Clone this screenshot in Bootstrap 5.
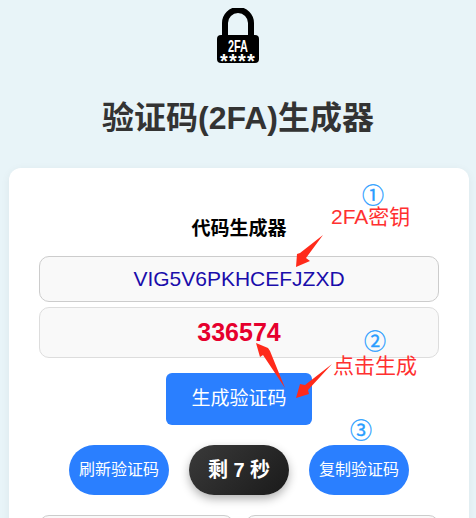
<!DOCTYPE html>
<html lang="en">

<head>
  <meta charset="UTF-8">
  <title>验证码(2FA)生成器</title>
  <link href="https://cdn.jsdelivr.net/npm/bootstrap@5.3.3/dist/css/bootstrap.min.css" rel="stylesheet">
  <style>
    body {
      background: #e8f4f8;
      font-family: "Liberation Sans", "Noto Sans CJK SC", sans-serif;
      color: #333;
      padding: 8px 7px 20px 7px;
    }

    .logo-box {
      height: 56px;
    }

    .logo-box svg {
      flex-shrink: 0;
    }

    .page-title {
      font-size: 32px;
      font-weight: 700;
      line-height: 37px;
      margin: 36px 0 31px;
      color: #333;
    }

    .main-box {
      position: relative;
      background: #fff;
      border-radius: 12px;
      padding: 49px 30px 30px;
      margin: 0 0 0 2px;
      box-shadow: 0 2px 10px rgba(0, 0, 0, .06);
    }

    .box-title {
      font-size: 19px;
      font-weight: 700;
      line-height: 24px;
      color: #000;
      margin-bottom: 15px;
    }

    .field {
      background: #f9f9f9;
      border: 1px solid #ccc;
      border-radius: 10px;
      text-align: center;
    }

    .secret-field {
      height: 46px;
      line-height: 44px;
      font-size: 21px;
      color: #1a0dab;
      margin-bottom: 5px;
    }

    .code-field {
      height: 51px;
      line-height: 49px;
      font-size: 25px;
      font-weight: 700;
      color: #e6002d;
      border-color: #ddd;
    }

    .gen-btn {
      width: 146px;
      height: 52px;
      margin-top: 15px;
      background: #2a7fff;
      border: 0;
      border-radius: 6px;
      color: #fff;
      font-size: 19px;
    }

    .pill-row {
      gap: 20px;
      margin-top: 20px;
    }

    .pill {
      width: 100px;
      height: 50px;
      border-radius: 25px;
      border: 0;
      padding: 0;
      color: #fff;
      font-size: 16px;
      background: #2a7fff;
    }

    .timer-pill {
      background: linear-gradient(135deg, #3a3a3a, #1a1a1a);
      font-size: 20px;
      font-weight: 700;
      box-shadow: 0 4px 10px rgba(0, 0, 0, .3);
    }

    .bottom-row {
      gap: 11px;
      margin-top: 20px;
    }

    .bottom-field {
      height: 46px;
      border-color: #ccc;
    }

    .note {
      position: absolute;
      color: #ff3030;
      font-size: 21px;
      line-height: 18px;
      white-space: nowrap;
    }

    .step {
      position: absolute;
      color: #2a9dff;
      font-size: 22px;
      line-height: 20px;
      -webkit-text-stroke: .3px #2a9dff;
    }

    .arrow-layer {
      position: absolute;
      left: 0;
      top: 0;
      pointer-events: none;
    }

    .lock-text {
      font-family: "Liberation Sans", sans-serif;
      font-weight: 700;
      fill: #fff;
    }
  </style>
</head>

<body>

  <!-- Logo -->
  <div class="logo-box d-flex justify-content-center">
    <svg width="44" height="70" viewBox="0 0 44 70">
      <path d="M9 30V15a13 13 0 0 1 26 0v15" fill="none" stroke="#000" stroke-width="6" />
      <rect x="1" y="27" width="42" height="28" rx="4" fill="#000" />
      <text class="lock-text" x="12" y="44" font-size="17" textLength="20" lengthAdjust="spacingAndGlyphs">2FA</text>
      <text class="lock-text" x="22" y="60" font-size="20" letter-spacing="1.2" text-anchor="middle">****</text>
    </svg>
  </div>

  <h1 class="page-title text-center">验证码(2FA)生成器</h1>

  <!-- Main card -->
  <div class="main-box">
    <div class="box-title text-center">代码生成器</div>
    <div class="field secret-field">VIG5V6PKHCEFJZXD</div>
    <div class="field code-field">336574</div>
    <div class="d-flex justify-content-center">
      <button class="btn gen-btn">生成验证码</button>
    </div>
    <div class="d-flex justify-content-center pill-row">
      <button class="btn pill">刷新验证码</button>
      <button class="btn pill timer-pill">剩 7 秒</button>
      <button class="btn pill">复制验证码</button>
    </div>
    <div class="d-flex bottom-row">
      <div class="field bottom-field flex-fill"></div>
      <div class="field bottom-field flex-fill"></div>
    </div>

    <!-- Annotations over the form -->
    <span class="step" style="left: 353px; top: 18px">①</span>
    <span class="note" style="left: 322px; top: 40px">2FA密钥</span>
    <span class="step" style="left: 355px; top: 164px">②</span>
    <span class="note" style="left: 324px; top: 189px">点击生成</span>
    <span class="step" style="left: 341px; top: 253px">③</span>
    <svg class="arrow-layer" width="460" height="350" viewBox="0 0 460 350">
      <path d="M314 67 L291 85 L288 86 L287 99 L301 93 L297 90 Z" fill="#ff2a1a" />
      <path d="M276 220 L261 183 L259 180 L247 175 L251 189 L254 187 Z" fill="#ff2a1a" />
      <path d="M323 196 L296 217 L291 216 L287 230 L300 226 L299 222 Z" fill="#ff2a1a" />
    </svg>
  </div>

</body>

</html>
